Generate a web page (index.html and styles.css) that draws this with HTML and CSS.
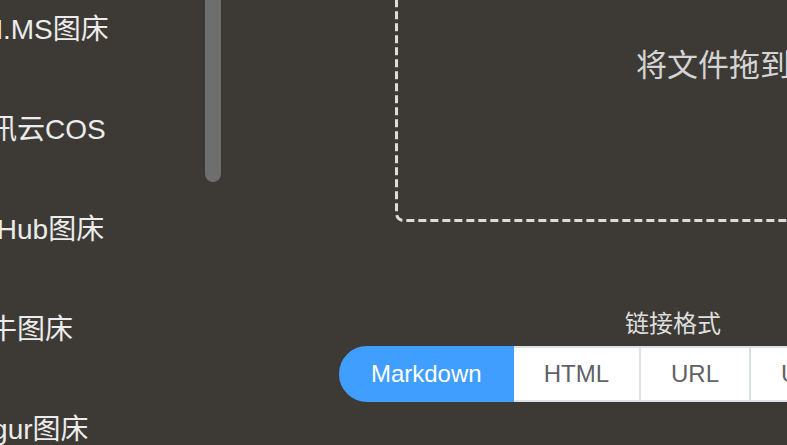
FILE: index.html
```html
<!DOCTYPE html>
<html lang="zh-CN">
<head>
<meta charset="utf-8">
<title>PicGo 上传</title>
<link rel="stylesheet" href="styles.css">
</head>
<body>
<div class="app">
  <aside class="sidebar">
    <ul class="menu">
      <li class="menu-item">SM.MS图床</li>
      <li class="menu-item">腾讯云COS</li>
      <li class="menu-item">GitHub图床</li>
      <li class="menu-item">七牛图床</li>
      <li class="menu-item">Imgur图床</li>
    </ul>
    <div class="thumb"></div>
  </aside>
  <main class="main">
    <div class="drop">
      <svg class="dash" width="556" height="380" viewBox="0 0 556 380" aria-hidden="true">
        <rect x="1.5" y="1.5" width="553" height="377" rx="7" ry="7" fill="none" stroke="#dcdcdc" stroke-width="3" stroke-dasharray="8 4"/>
      </svg>
      <div class="drop-text">将文件拖到此处，或 <span class="drop-link">点击上传</span></div>
    </div>
    <div class="format">
      <div class="format-label">链接格式</div>
      <div class="group">
        <span class="btn btn-active">Markdown</span>
        <span class="btn">HTML</span>
        <span class="btn">URL</span>
        <span class="btn">UBB</span>
        <span class="btn">Custom</span>
      </div>
    </div>
  </main>
</div>
</body>
</html>
```

FILE: styles.css
```css
html, body {
  margin: 0;
  padding: 0;
  width: 787px;
  height: 445px;
  overflow: hidden;
  background: #3d3a36;
}

body {
  font-family: "Liberation Sans", "Noto Sans CJK SC", sans-serif;
}

.app {
  display: flex;
  height: 445px;
  overflow: hidden;
}

.sidebar {
  position: relative;
  flex: 0 0 270px;
  width: 270px;
  margin-left: -39px;
}

.menu {
  list-style: none;
  margin: -20px 0 0 0;
  padding: 0;
}

.menu-item {
  height: 100px;
  line-height: 100px;
  font-size: 28px;
  color: #ececec;
  white-space: nowrap;
}

.thumb {
  position: absolute;
  top: 0;
  left: 244px;
  width: 16px;
  height: 182px;
  background: #6e6e6e;
  border-radius: 0 0 8px 8px;
}

.main {
  flex: 0 0 884px;
  width: 884px;
  display: flex;
  flex-direction: column;
  align-items: center;
}

.drop {
  position: relative;
  flex: 0 0 auto;
  width: 556px;
  height: 380px;
  margin-top: -158px;
  box-sizing: border-box;
  padding: 201px 0 0 241px;
}

.dash {
  position: absolute;
  left: 0;
  top: 0;
}

.drop-text {
  font-family: "Noto Sans CJK SC", sans-serif;
  font-size: 31px;
  line-height: 40px;
  color: #d4d4d4;
  white-space: nowrap;
}

.drop-link {
  color: #409eff;
}

.format {
  margin-top: 84px;
  display: flex;
  flex-direction: column;
  align-items: center;
}

.format-label {
  font-family: "Noto Sans CJK SC", sans-serif;
  font-size: 24px;
  line-height: 32px;
  color: #dedede;
  margin-bottom: 8px;
}

.group {
  display: flex;
  white-space: nowrap;
}

.btn {
  display: block;
  padding: 14px 30px;
  font-size: 24px;
  line-height: 24px;
  color: #606266;
  background: #ffffff;
  border: 2px solid #dcdfe6;
  border-left: 0;
}

.btn:first-child {
  border-left: 2px solid #dcdfe6;
  border-radius: 28px 0 0 28px;
}

.btn-active {
  color: #ffffff;
  background: #409eff;
  border-color: #409eff;
}

.btn-active:first-child {
  border-left-color: #409eff;
}

.btn:last-child {
  border-radius: 0 28px 28px 0;
}
```
